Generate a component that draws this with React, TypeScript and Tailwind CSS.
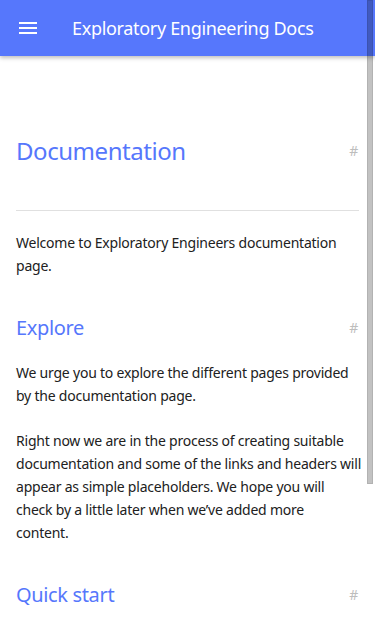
import React from "react";

function Heading({ level, children }: { level: 1 | 2; children: React.ReactNode }) {
  if (level === 1) {
    return (
      <div className="flex items-center justify-between">
        <h1 className="text-[24px] leading-[32px] tracking-[-0.45px] text-[#5677fc] font-normal">{children}</h1>
        <span className="text-[14px] leading-[20px] text-[#bdbdbd] pr-[1px]">#</span>
      </div>
    );
  }
  return (
    <div className="flex items-center justify-between">
      <h2 className="text-[20px] leading-[28px] tracking-[-0.35px] text-[#5677fc] font-normal">{children}</h2>
      <span className="text-[14px] leading-[20px] text-[#bdbdbd] pr-[1px]">#</span>
    </div>
  );
}

export default function App() {
  return (
    <div
      className="relative h-[627px] w-[375px] overflow-hidden bg-white"
      style={{ fontFamily: '"Noto Sans", "Open Sans", sans-serif' }}
    >
      <header className="relative z-10 flex h-14 items-center bg-[#5677fc] shadow-[0_2px_4px_rgba(0,0,0,0.25)]">
        <button className="ml-[19px] flex h-[12px] w-[18px] flex-col justify-between">
          <span className="block h-[2px] w-[18px] bg-white" />
          <span className="block h-[2px] w-[18px] bg-white" />
          <span className="block h-[2px] w-[18px] bg-white" />
        </button>
        <div className="ml-[35px] text-[18px] leading-[24px] tracking-[-0.32px] text-white">Exploratory Engineering Docs</div>
      </header>

      <main className="px-4 text-[14px] leading-[23px] tracking-[-0.22px] text-[#212121]">
        <div className="pt-[79px]">
          <Heading level={1}>Documentation</Heading>
        </div>
        <hr className="mt-[43px] border-t border-[#e0e0e0]" />
        <p className="mt-[20px] -mr-[3px]">Welcome to Exploratory Engineers documentation page.</p>
        <div className="mt-[37px]">
          <Heading level={2}>Explore</Heading>
        </div>
        <p className="mt-[19px] -mr-[3px]">We urge you to explore the different pages provided by the documentation page.</p>
        <p className="mt-[22px] -mr-[3px]">
          Right now we are in the process of creating suitable documentation and some of the links and headers will
          appear as simple placeholders. We hope you will check by a little later when we’ve added more
          <br />
          content.
        </p>
        <div className="mt-[37px]">
          <Heading level={2}>Quick start</Heading>
        </div>
      </main>

      <div className="absolute right-[2px] top-0 z-20 h-[484px] w-[6px] border border-[rgba(0,0,0,0.08)] bg-[rgba(0,0,0,0.24)]" />
    </div>
  );
}
